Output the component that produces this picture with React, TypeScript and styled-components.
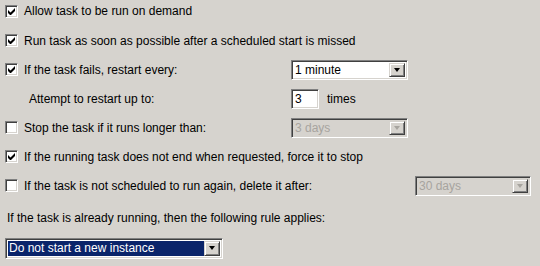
import React from 'react';
import styled, { createGlobalStyle } from 'styled-components';

const Global = createGlobalStyle`
  html, body { margin: 0; padding: 0; background: #d6d3ce; }
  body { font-family: Tahoma, "Liberation Sans", Arial, sans-serif; font-size: 12px; color: #000; }
`;

const Page = styled.div`
  width: 540px;
  height: 266px;
  overflow: hidden;
  background: #d6d3ce;
  padding: 0 0 0 5px;
  box-sizing: border-box;
  display: flex;
  flex-direction: column;
`;

const Row = styled.div<{ $h?: number; $pb?: number }>`
  display: flex;
  align-items: center;
  height: ${(p) => p.$h ?? 29}px;
  padding-bottom: ${(p) => p.$pb ?? 0}px;
  box-sizing: border-box;
  flex: none;
`;

const LabelCell = styled.div<{ $w: number; $indent?: number }>`
  width: ${(p) => p.$w}px;
  padding-left: ${(p) => p.$indent ?? 0}px;
  box-sizing: border-box;
  display: flex;
  align-items: center;
  gap: 6px;
  white-space: nowrap;
`;

const Box = styled.span`
  width: 13px;
  height: 13px;
  box-sizing: border-box;
  flex: none;
  background: #fff;
  border-top: 1px solid #808080;
  border-left: 1px solid #808080;
  border-right: 1px solid #fff;
  border-bottom: 1px solid #fff;
  box-shadow: inset 1px 1px 0 #404040, inset -1px -1px 0 #d6d3ce;
  display: flex;
  align-items: center;
  justify-content: center;
`;

const Sunken = styled.div<{ $w: number; $h?: number; $disabled?: boolean }>`
  width: ${(p) => p.$w}px;
  height: ${(p) => p.$h ?? 20}px;
  box-sizing: border-box;
  background: ${(p) => (p.$disabled ? '#d6d3ce' : '#fff')};
  color: ${(p) => (p.$disabled ? '#a7a49f' : '#000')};
  border-top: 1px solid #808080;
  border-left: 1px solid #808080;
  border-right: 1px solid #fff;
  border-bottom: 1px solid #fff;
  box-shadow: inset 1px 1px 0 #404040, inset -1px -1px 0 #d6d3ce;
  display: flex;
  align-items: stretch;
  padding: 2px;
  flex: none;
`;

const Value = styled.div<{ $selected?: boolean }>`
  flex: 1;
  display: flex;
  align-items: center;
  padding-left: 1px;
  white-space: nowrap;
  background: ${(p) => (p.$selected ? '#0a246a' : 'transparent')};
  color: ${(p) => (p.$selected ? '#fff' : 'inherit')};
`;

const DropBtn = styled.div<{ $disabled?: boolean }>`
  width: 16px;
  flex: none;
  box-sizing: border-box;
  background: #d6d3ce;
  border-top: 1px solid #d6d3ce;
  border-left: 1px solid #d6d3ce;
  border-right: 1px solid #404040;
  border-bottom: 1px solid #404040;
  box-shadow: inset 1px 1px 0 #fff, inset -1px -1px 0 #808080;
  display: flex;
  align-items: center;
  justify-content: center;
  &::after {
    content: '';
    border-left: 3.5px solid transparent;
    border-right: 3.5px solid transparent;
    border-top: 4px solid ${(p) => (p.$disabled ? '#a7a49f' : '#000')};
  }
`;

const After = styled.span`
  margin-left: 8px;
`;

const Heading = styled.div`
  height: 35px;
  display: flex;
  align-items: flex-end;
  padding-left: 2px;
  padding-bottom: 10px;
  box-sizing: border-box;
  flex: none;
`;

const Check = () => (
  <svg width="7" height="7" viewBox="0 0 7 7">
    <path d="M0 2v3l2 2h1l4-4V0L2.5 4.5z" fill="#000" />
  </svg>
);

const CheckRow = ({ label, checked }: { label: string; checked?: boolean }) => (
  <>
    <Box>{checked && <Check />}</Box>
    <span>{label}</span>
  </>
);

const Combo = ({ w, value, disabled, selected, h }: { w: number; value: string; disabled?: boolean; selected?: boolean; h?: number }) => (
  <Sunken $w={w} $h={h} $disabled={disabled}>
    <Value $selected={selected}>{value}</Value>
    <DropBtn $disabled={disabled} />
  </Sunken>
);

export default function App() {
  return (
    <Page>
      <Global />
      <Row $h={26} $pb={4}>
        <LabelCell $w={400}><CheckRow checked label="Allow task to be run on demand" /></LabelCell>
      </Row>
      <Row>
        <LabelCell $w={400}><CheckRow checked label="Run task as soon as possible after a scheduled start is missed" /></LabelCell>
      </Row>
      <Row>
        <LabelCell $w={286}><CheckRow checked label="If the task fails, restart every:" /></LabelCell>
        <Combo w={117} value="1 minute" />
      </Row>
      <Row>
        <LabelCell $w={286} $indent={24}>Attempt to restart up to:</LabelCell>
        <Sunken $w={28}><Value>3</Value></Sunken>
        <After>times</After>
      </Row>
      <Row>
        <LabelCell $w={286}><CheckRow label="Stop the task if it runs longer than:" /></LabelCell>
        <Combo w={117} value="3 days" disabled />
      </Row>
      <Row>
        <LabelCell $w={400}><CheckRow checked label="If the running task does not end when requested, force it to stop" /></LabelCell>
      </Row>
      <Row>
        <LabelCell $w={410}><CheckRow label="If the task is not scheduled to run again, delete it after:" /></LabelCell>
        <Combo w={116} value="30 days" disabled />
      </Row>
      <Heading>If the task is already running, then the following rule applies:</Heading>
      <Row $h={26}>
        <Combo w={218} h={21} value="Do not start a new instance" selected />
      </Row>
    </Page>
  );
}
